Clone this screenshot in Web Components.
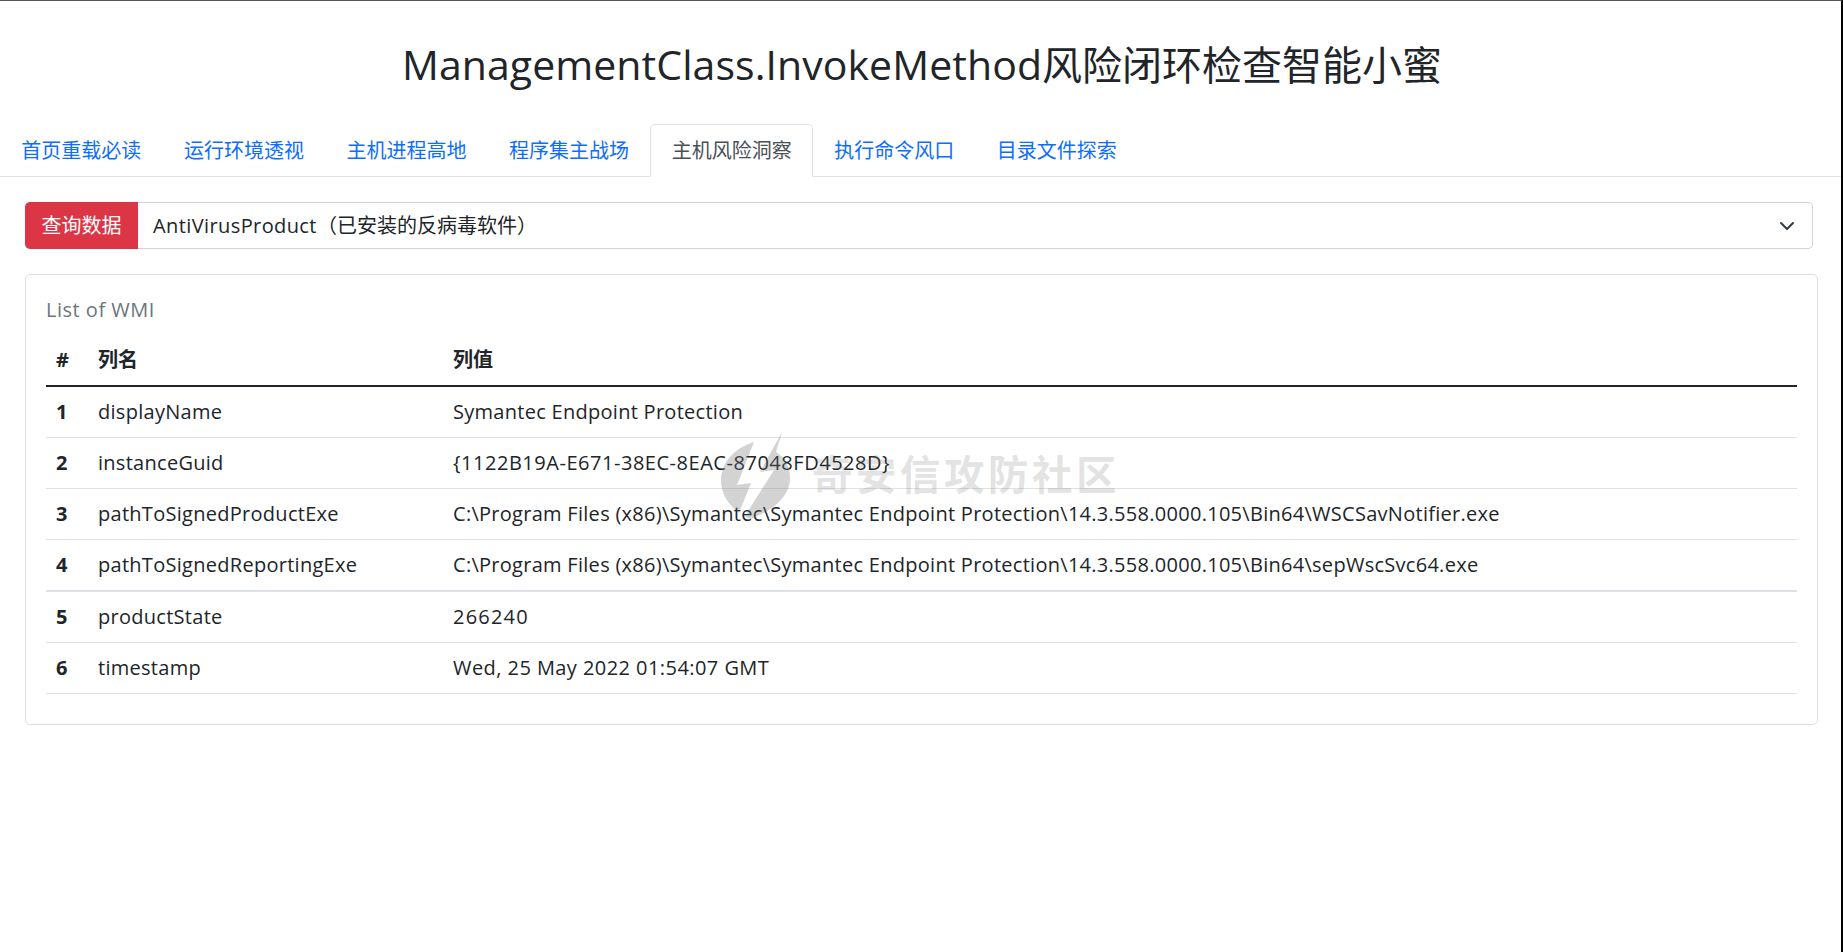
<!DOCTYPE html>
<html lang="zh">
<head>
<meta charset="utf-8">
<title>ManagementClass.InvokeMethod</title>
<style>
    html, body { margin: 0; height: 100%; background: #fff; }
    body {
        box-sizing: border-box;
        border-top: 1px solid #555;
        border-right: 2px solid #000;
        font-family: "Open Sans", "Noto Sans CJK SC", sans-serif;
        font-size: 20px;
        line-height: 30px;
        color: #212529;
        overflow: hidden;
    }
</style>
</head>
<body>
<page-title>ManagementClass.InvokeMethod<span>风险闭环检查智能小蜜</span></page-title>
<nav-tabs>
    <nav-tab>首页重载必读</nav-tab>
    <nav-tab>运行环境透视</nav-tab>
    <nav-tab>主机进程高地</nav-tab>
    <nav-tab>程序集主战场</nav-tab>
    <nav-tab active>主机风险洞察</nav-tab>
    <nav-tab>执行命令风口</nav-tab>
    <nav-tab>目录文件探索</nav-tab>
</nav-tabs>
<query-select label="查询数据"><span>AntiVirusProduct</span>（已安装的反病毒软件）</query-select>
<wmi-card heading="List of WMI">
    <wmi-row head num="#" name="列名" val="列值"></wmi-row>
    <wmi-row num="1" name="displayName" val="Symantec Endpoint Protection"></wmi-row>
    <wmi-row style="--val-spacing: 0.53px" num="2" name="instanceGuid" val="{1122B19A-E671-38EC-8EAC-87048FD4528D}"></wmi-row>
    <wmi-row num="3" name="pathToSignedProductExe" val="C:\Program Files (x86)\Symantec\Symantec Endpoint Protection\14.3.558.0000.105\Bin64\WSCSavNotifier.exe"></wmi-row>
    <wmi-row thick num="4" name="pathToSignedReportingExe" val="C:\Program Files (x86)\Symantec\Symantec Endpoint Protection\14.3.558.0000.105\Bin64\sepWscSvc64.exe"></wmi-row>
    <wmi-row style="--val-spacing: 1.2px" num="5" name="productState" val="266240"></wmi-row>
    <wmi-row style="--val-spacing: 0.44px" num="6" name="timestamp" val="Wed, 25 May 2022 01:54:07 GMT"></wmi-row>
</wmi-card>
<water-mark>奇安信攻防社区</water-mark>

<script>
class PageTitle extends HTMLElement {
    connectedCallback() {
        this.attachShadow({ mode: "open" });
        this.shadowRoot.innerHTML = `
            <style>
                :host { display: block; padding: 33px 0 0 3px; height: 90px; text-align: center; }
                h1 { margin: 0; font-size: 41px; font-weight: 400; line-height: 60px; letter-spacing: 0.07px; }
                ::slotted(span) { font-size: 40px; letter-spacing: 0; }
            </style>
            <h1><slot></slot></h1>
        `;
    }
}

class NavTabs extends HTMLElement {
    connectedCallback() {
        this.attachShadow({ mode: "open" });
        this.shadowRoot.innerHTML = `
            <style>
                :host { display: flex; border-bottom: 1px solid #dee2e6; }
            </style>
            <slot></slot>
        `;
    }
}

class NavTab extends HTMLElement {
    connectedCallback() {
        this.attachShadow({ mode: "open" });
        this.shadowRoot.innerHTML = `
            <style>
                :host {
                    display: block;
                    padding: 10.5px 20.3px;
                    margin-bottom: -1px;
                    border: 1px solid transparent;
                    border-radius: 5px 5px 0 0;
                    color: #0d6efd;
                }
                :host([active]) {
                    color: #495057;
                    background: #fff;
                    border-color: #dee2e6 #dee2e6 #fff;
                }
            </style>
            <slot></slot>
        `;
    }
}

class QuerySelect extends HTMLElement {
    connectedCallback() {
        this.attachShadow({ mode: "open" });
        this.shadowRoot.innerHTML = `
            <style>
                :host { display: flex; height: 47px; margin: 25px 28px 25px 25px; }
                .label {
                    display: flex;
                    align-items: center;
                    padding: 0 16.5px;
                    background: #dc3545;
                    color: #fff;
                    border-radius: 5px 0 0 5px;
                }
                .select {
                    flex: 1;
                    display: flex;
                    align-items: center;
                    justify-content: space-between;
                    padding: 0 17px 0 15px;
                    border: 1px solid #ced4da;
                    border-left: none;
                    border-radius: 0 5px 5px 0;
                }
                ::slotted(span) { letter-spacing: 0.4px; }
                svg { width: 16px; height: 16px; display: block; }
            </style>
            <div class="label"></div>
            <div class="select">
                <span><slot></slot></span>
                <svg viewBox="0 0 16 16"><path fill="none" stroke="#343a40" stroke-linecap="round" stroke-linejoin="round" stroke-width="2" d="M2 5l6 6 6-6"/></svg>
            </div>
        `;
        this.shadowRoot.querySelector('.label').textContent = this.getAttribute('label');
    }
}

class WmiCard extends HTMLElement {
    connectedCallback() {
        this.attachShadow({ mode: "open" });
        this.shadowRoot.innerHTML = `
            <style>
                :host {
                    display: block;
                    margin: 0 23px 0 25px;
                    padding: 20px 20px 30px;
                    border: 1px solid #dfdfdf;
                    border-radius: 5px;
                }
                .heading { color: #6c757d; margin-bottom: 10px; letter-spacing: 0.5px; }
            </style>
            <div class="heading"></div>
            <slot></slot>
        `;
        this.shadowRoot.querySelector('.heading').textContent = this.getAttribute('heading');
    }
}

class WmiRow extends HTMLElement {
    connectedCallback() {
        this.attachShadow({ mode: "open" });
        this.shadowRoot.innerHTML = `
            <style>
                :host {
                    display: grid;
                    grid-template-columns: 42px 355px 1fr;
                    border-bottom: 1px solid #dee2e6;
                    letter-spacing: 0.28px;
                }
                :host([head]) { border-bottom: 2px solid #212529; font-weight: 700; letter-spacing: 0; }
                :host([thick]) { border-bottom-width: 2px; }
                div { padding: 10px; }
                .num { font-weight: 700; }
                .val { letter-spacing: var(--val-spacing, inherit); }
            </style>
            <div class="num"></div>
            <div class="name"></div>
            <div class="val"></div>
        `;
        for (const key of ['num', 'name', 'val']) {
            this.shadowRoot.querySelector('.' + key).textContent = this.getAttribute(key);
        }
    }
}

class WaterMark extends HTMLElement {
    connectedCallback() {
        this.attachShadow({ mode: "open" });
        this.shadowRoot.innerHTML = `
            <style>
                :host {
                    position: absolute;
                    left: 718px;
                    top: 430px;
                    display: flex;
                    align-items: center;
                    pointer-events: none;
                    color: rgba(110, 110, 110, 0.2);
                    font-size: 40.5px;
                    font-weight: 700;
                    letter-spacing: 3.5px;
                    line-height: 1;
                }
                svg { width: 76px; height: 90px; display: block; margin-right: 18px; }
            </style>
            <svg viewBox="0 0 76 90">
                <path fill="rgba(110,110,110,0.3)" d="M36 12 C16 18 3 33 3 50 C3 64 10 74 21 83 L33 53 L19 55 Z"/>
                <path fill="rgba(110,110,110,0.3)" d="M64 2 L42 42 L56 40 L27 86 L32 89 C52 82 72 68 72 48 C72 36 67 28 58 22 Z"/>
            </svg>
            <span><slot></slot></span>
        `;
    }
}

customElements.define("page-title", PageTitle);
customElements.define("nav-tabs", NavTabs);
customElements.define("nav-tab", NavTab);
customElements.define("query-select", QuerySelect);
customElements.define("wmi-card", WmiCard);
customElements.define("wmi-row", WmiRow);
customElements.define("water-mark", WaterMark);
</script>
</body>
</html>
